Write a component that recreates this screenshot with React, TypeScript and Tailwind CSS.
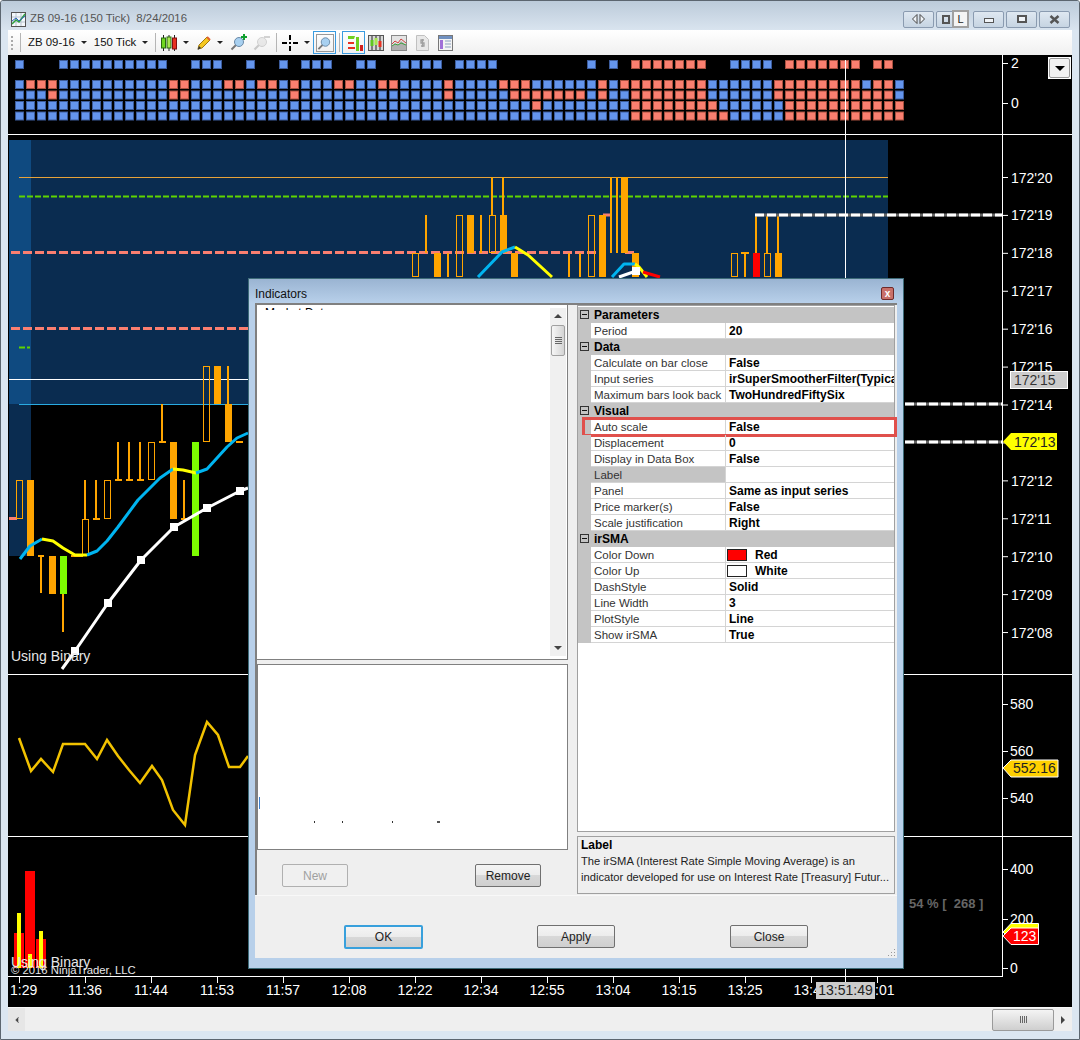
import { ChevronLeft } from "lucide-react"

const orange = "#ffa500"
const salmon = "#fa7f70"
const blue = "#6495ed"

// [first, last] columns, inclusive
const topBlue = [[0, 0], [4, 13], [16, 18], [21, 21], [24, 24], [26, 28], [31, 32], [35, 38], [40, 43], [52, 52], [54, 54], [65, 68]]
const topRed = [[56, 62], [70, 76], [78, 79]]
const rowRed = [
  [[1, 3], [14, 15], [19, 20], [22, 23], [25, 25], [29, 30], [33, 34], [39, 39], [44, 46], [53, 53], [55, 62], [69, 76], [78, 79]],
  [[3, 3], [14, 15], [25, 25], [39, 39], [45, 51], [53, 53], [56, 62], [69, 79]],
  [[47, 47], [56, 63], [70, 80]],
  [[56, 64], [70, 80]],
]

const inRange = (ranges: number[][], i: number) => ranges.some(([a, b]) => i >= a && i <= b)

// solid bodies: x, y1, y2, colour
const solids: [number, number, number, string][] = [
  [27, 480, 556, orange], [49, 556, 594, orange], [60, 556, 594, "#7cfc00"], [170, 442, 519, orange],
  [192, 442, 556, "#7cfc00"], [214, 366, 404, orange], [225, 404, 442, orange],
  [434, 253, 277, orange], [467, 215, 253, orange], [500, 215, 253, orange], [511, 253, 277, orange],
  [599, 215, 277, orange], [621, 177, 253, orange], [632, 253, 277, orange],
  [753, 253, 277, "#ff0000"], [775, 253, 277, orange],
]
// hollow bodies: x, y1, y2
const hollows = [
  [16, 480, 519], [82, 519, 556], [104, 480, 519], [148, 442, 480], [203, 366, 442],
  [412, 253, 277], [456, 215, 277], [489, 215, 253], [588, 215, 277], [731, 253, 277], [764, 253, 277],
]
// wicks: x, y1, y2
const wicks = [
  [41, 556, 593], [63, 594, 632], [85, 480, 519], [96, 480, 519], [118, 442, 480], [129, 442, 480],
  [140, 442, 480], [162, 404, 442], [184, 480, 519], [228, 366, 404],
  [426, 215, 253], [448, 253, 277], [481, 215, 253], [492, 177, 215], [503, 177, 215], [569, 253, 277],
  [580, 253, 277], [611, 177, 253], [617, 177, 253], [745, 253, 277], [756, 215, 253], [767, 215, 253], [778, 215, 253],
]
// small horizontal ticks: x1, x2, y
const ticks = [
  [38, 44, 556], [71, 83, 556], [93, 100, 519], [115, 122, 480], [126, 133, 480], [137, 144, 480],
  [159, 166, 442], [181, 188, 519], [236, 243, 442], [741, 749, 253],
]

const whiteDots = [[75, 651], [108, 603], [141, 560], [174, 527], [207, 508], [240, 491]]
const priceLabels = ["172'20", "172'19", "172'18", "172'17", "172'16", "172'15", "172'14", "172'13", "172'12", "172'11", "172'10", "172'09", "172'08"]
const timeLabels = [
  [85, "11:36"], [151, "11:44"], [217, "11:53"], [283, "11:57"], [349, "12:08"], [415, "12:22"],
  [481, "12:34"], [547, "12:55"], [613, "13:04"], [679, "13:15"], [745, "13:25"], [811, "13:41"], [877, "14:01"],
] as [number, string][]

const grid = [
  { head: "Parameters" },
  { name: "Period", value: "20" },
  { head: "Data" },
  { name: "Calculate on bar close", value: "False" },
  { name: "Input series", value: "irSuperSmootherFilter(Typical)" },
  { name: "Maximum bars look back", value: "TwoHundredFiftySix" },
  { head: "Visual" },
  { name: "Auto scale", value: "False", marked: true },
  { name: "Displacement", value: "0" },
  { name: "Display in Data Box", value: "False" },
  { name: "Label", value: "", selected: true },
  { name: "Panel", value: "Same as input series" },
  { name: "Price marker(s)", value: "False" },
  { name: "Scale justification", value: "Right" },
  { head: "irSMA" },
  { name: "Color Down", value: "Red", swatch: "bg-[#ff0000]" },
  { name: "Color Up", value: "White", swatch: "bg-white" },
  { name: "DashStyle", value: "Solid" },
  { name: "Line Width", value: "3" },
  { name: "PlotStyle", value: "Line" },
  { name: "Show irSMA", value: "True" },
]

function Caret() {
  return <span className="ml-[6px] w-0 h-0 border-x-[3px] border-x-transparent border-t-[3px] border-t-[#222]" />
}

function Separator({ className }: { className: string }) {
  return <span className={`w-px h-[19px] bg-[#b5b5b5] ${className}`} />
}

function CandlesIcon() {
  return (
    <svg width="16" height="18" viewBox="0 0 16 18">
      <path d="M2.5 1v16M8 1v16M13.500 1v16" stroke="#222" />
      <rect x="0.500" y="4" width="4" height="10" fill="#70d820" stroke="#2a6a10" />
      <rect x="6" y="3" width="4" height="11" fill="#a8e850" stroke="#2a6a10" />
      <rect x="11.500" y="4" width="4" height="11" fill="#e83020" stroke="#801010" />
    </svg>
  )
}

function MagnifierIcon({ dim, sign }: { dim?: boolean; sign?: "plus" | "minus" }) {
  return (
    <svg width="17" height="17" viewBox="0 0 17 17" opacity={dim ? 0.35 : 1}>
      <path d="M1.500 15.500 6 11" stroke="#777" strokeWidth="2" />
      <circle cx="9" cy="8" r="4.500" fill={dim ? "#ccc" : "#a8d0f0"} stroke={dim ? "#888" : "#6a8aa8"} />
      {sign === "plus" && <path d="M14 0v6M11 3h6" stroke="#10a030" strokeWidth="2" />}
      {sign === "minus" && <path d="M11 3h6" stroke="#888" strokeWidth="2" />}
    </svg>
  )
}

function ToolbarIcons() {
  return (
    <>
      <span className="ml-[5px]"><CandlesIcon /></span>
      <Caret />
      <svg className="ml-[7px]" width="15" height="16" viewBox="0 0 15 16">
        <path d="M3 10 11 2l3 3-8 8-4 1z" fill="#f5c820" stroke="#a07810" />
        <path d="M1.500 15 3 11l2 2z" fill="#333" />
        <path d="M11 2l3 3" stroke="#e06030" strokeWidth="2" />
      </svg>
      <Caret />
      <span className="ml-[7px]"><MagnifierIcon sign="plus" /></span>
      <span className="ml-[6px]"><MagnifierIcon dim sign="minus" /></span>
      <Separator className="ml-[6px]" />
      <svg className="ml-[5px]" width="16" height="16" viewBox="0 0 16 16">
        <path d="M0 8h5M11 8h5M8 0v5M8 11v5M7 8h2" stroke="#000" strokeWidth="2" />
      </svg>
      <Caret />
      <span className="ml-[3px] w-[23px] h-[23px] border border-[#3a9be0] flex items-center justify-center">
        <span className="w-[18px] h-[18px] border border-[#999] flex items-center justify-center">
          <MagnifierIcon />
        </span>
      </span>
      <Separator className="ml-[3px]" />
      <span className="ml-[2px] w-[23px] h-[23px] border border-[#3a9be0] flex items-center justify-center">
        <svg width="18" height="18" viewBox="0 0 18 18">
          <path d="M3 2h7l-1 3H3z" fill="#6fd020" />
          <path d="M3 8h6v2H3z" fill="#e83020" />
          <path d="M3 13h7v2H3z" fill="#e83020" />
          <rect x="11" y="3" width="3" height="14" fill="#6fd020" />
          <rect x="15" y="11" width="3" height="6" fill="#d02020" />
        </svg>
      </span>
      <span className="ml-[3px]">
        <svg width="16" height="16" viewBox="0 0 16 16">
          <rect x="0.500" y="0.500" width="15" height="15" fill="#d8d8d8" stroke="#555" />
          <path d="M4 1v14M8 1v14M12 1v14" stroke="#222" />
          <rect x="2.500" y="5" width="3" height="6" fill="#60c820" />
          <rect x="6.500" y="3" width="3" height="7" fill="#a8e850" />
          <rect x="10.500" y="6" width="3" height="6" fill="#e83020" />
        </svg>
      </span>
      <span className="ml-[7px]">
        <svg width="16" height="16" viewBox="0 0 16 16">
          <rect x="0.500" y="0.500" width="15" height="15" fill="#e4e4e4" stroke="#888" />
          <path d="M1 15v-4l3-3 3 2 3-4 5 4v5z" fill="#b0b0b0" />
          <path d="M1 9l3-3 3 2 3-4 5 4" fill="none" stroke="#d04040" />
          <path d="M1 11l3-2 3 1 3-2 5 2" fill="none" stroke="#40a040" />
        </svg>
      </span>
      <span className="ml-[9px]">
        <svg width="13" height="16" viewBox="0 0 13 16">
          <path d="M0.500 0.500h8l4 4v11h-12z" fill="#e8e8e8" stroke="#c0c0c0" />
          <path d="M8 5H5v3h3v3H5M6.500 4v8" fill="none" stroke="#a0a0a0" strokeWidth="1.300" />
        </svg>
      </span>
      <span className="ml-[9px]">
        <svg width="15" height="16" viewBox="0 0 15 16">
          <rect x="0.500" y="0.500" width="14" height="15" fill="#f4f4f4" stroke="#777" />
          <rect x="1" y="1" width="13" height="3" fill="#7090c0" />
          <rect x="2" y="5" width="3" height="9" fill="#a070d8" />
          <path d="M7 6h6M7 9h6M7 12h6" stroke="#8aa0c0" />
        </svg>
      </span>
    </>
  )
}

function SignalPanel() {
  const cols = Array.from({ length: 81 }, (_, i) => i)
  const ys = [80.5, 91, 101.500, 112]
  const cell = (i: number, y: number, red: boolean) => (
    <rect
      key={`${i}-${y}`}
      x={15.5 + i * 11}
      y={y}
      width="8"
      height="8"
      fill={red ? salmon : blue}
      stroke={red ? "#a8503f" : "#3c5c9c"}
    />
  )
  return (
    <svg className="block" width="1064" height="80" viewBox="8 55 1064 80">
      {cols.map((i) => {
        if (inRange(topBlue, i)) return cell(i, 60.5, false)
        if (inRange(topRed, i)) return cell(i, 60.5, true)
        return null
      })}
      {ys.map((y, r) => cols.map((i) => cell(i, y, inRange(rowRed[r], i))))}
      <path d="M845.500 60v75M1002.500 55v80M8 134.500h1064M1002 63.500h6M1002 103.500h6" stroke="#fff" />
      <text x="1011" y="68" fill="#fff" fontSize="14">2</text>
      <text x="1011" y="108" fill="#fff" fontSize="14">0</text>
    </svg>
  )
}

function PricePanel() {
  return (
    <svg className="block" width="1064" height="540" viewBox="8 135 1064 540">
      <rect x="9" y="140" width="879" height="264" fill="#0a2c50" />
      <rect x="9" y="140" width="22" height="264" fill="#0f4a80" />
      <rect x="9" y="404" width="22" height="152" fill="#0a2c50" />

      <path d="M19 177.500h869" stroke="#e8a33a" />
      <path d="M19 196.500h869M19 347.500h11" stroke="#5fd400" strokeWidth="2" strokeDasharray="6 2" />
      <path d="M11 252.500h590M11 328.500h237" stroke={salmon} strokeWidth="3" strokeDasharray="9 3" />
      <path d="M9 379.500h239" stroke="#fff" />
      <path d="M19 404.500h229" stroke="#29abe2" />
      <rect x="9" y="517" width="8" height="3" fill={salmon} />
      <rect x="603" y="213.500" width="9" height="3" fill={salmon} />
      <rect x="625" y="251" width="9" height="3" fill={salmon} />

      {wicks.map(([x, a, b]) => <rect key={`w${x}${a}`} x={x - 1} y={a} width="2" height={b - a} fill={orange} />)}
      {ticks.map(([a, b, y]) => <rect key={`t${a}`} x={a} y={y - 1} width={b - a} height="2" fill={orange} />)}
      {hollows.map(([x, a, b]) => (
        <rect key={`h${x}`} x={x + 0.5} y={a + 0.5} width="6" height={b - a - 1} fill="none" stroke={orange} />
      ))}
      {solids.map(([x, a, b, c]) => <rect key={`s${x}`} x={x} y={a} width="7" height={b - a} fill={c} />)}

      <g fill="none" strokeWidth="3" strokeLinejoin="round">
        <path d="M20 559 30 546 42 539" stroke="#00b4f0" />
        <path d="M42 539 53 541 63 548 75 555 87 555" stroke="#ffff00" />
        <path d="M87 555 97 551 107 541 118 527 138 500 160 478 173 469" stroke="#00b4f0" />
        <path d="M173 469 183 470 196 473" stroke="#ffff00" />
        <path d="M196 473 207 469 227 447 237 438 248 433" stroke="#00b4f0" />
        <path d="M478 277 502 252 515 247" stroke="#00b4f0" />
        <path d="M515 247 528 255 552 277" stroke="#ffff00" />
        <path d="M612 277 624 264 635 264" stroke="#00b4f0" />
        <path d="M635 264 639 267 647 277" stroke="#ffff00" />
        <path d="M643 272 660 277" stroke="#ff0000" />
        <path d="M619 277 636 271" stroke="#fff" />
        <path d="M62 669 75 651 108 603 141 560 174 527 207 508 240 491 248 488" stroke="#fff" />
      </g>
      {whiteDots.map(([x, y]) => <rect key={x} x={x - 4} y={y - 4} width="8" height="8" fill="#fff" />)}
      <rect x="632" y="267" width="8" height="8" fill="#fff" />

      <path d="M755 215h247M905 404h97M905 442h97" stroke="#666" strokeWidth="3" />
      <path d="M755 215h247M905 404h97M905 442h97" stroke="#fff" strokeWidth="3" strokeDasharray="9 3" />
      <path d="M845.500 135v540M1002.500 135v540M8 674.500h1064" stroke="#fff" />

      {priceLabels.map((label, i) => (
        <g key={label}>
          <path d={`M1002 ${177.5 + i * 37.92}h6`} stroke="#fff" />
          <text x="1011" y={182.500 + i * 37.92} fill="#fff" fontSize="14">{label}</text>
        </g>
      ))}

      <rect x="1010.500" y="371.500" width="57" height="17" fill="#cccccc" stroke="#fff" />
      <text x="1014" y="385" fill="#333" fontSize="14">172'15</text>
      <polygon points="1003,441.500 1011,433 1057,433 1057,450 1011,450" fill="#ffff00" />
      <text x="1014" y="447" fill="#222" fontSize="14">172'13</text>

      <text x="11" y="661" fill="#e8e8e8" fontSize="14">Using Binary</text>
    </svg>
  )
}

function IndicatorPanel() {
  return (
    <svg className="block" width="1064" height="162" viewBox="8 675 1064 162">
      <path
        d="M19 738 31 771 41 759 53 772 63 744 85 744 97 759 107 740 118 756 129 770 140 783 152 766 162 780 173 810 185 825 195 755 207 722 218 735 229 767 240 767 248 756"
        fill="none"
        stroke="#f2c200"
        strokeWidth="2.500"
      />
      <path d="M845.500 675v162M1002.500 675v162M8 836.500h1064M1002 704.500h6M1002 751.500h6M1002 798.500h6" stroke="#fff" />
      <text x="1010" y="709" fill="#fff" fontSize="14">580</text>
      <text x="1010" y="756" fill="#fff" fontSize="14">560</text>
      <text x="1010" y="803" fill="#fff" fontSize="14">540</text>
      <polygon points="1003,768 1011,760 1058,760 1058,777 1011,777" fill="#ffd000" stroke="#fff" />
      <text x="1013" y="773" fill="#222" fontSize="14">552.16</text>
    </svg>
  )
}

function VolumePanel() {
  return (
    <svg className="block" width="1064" height="140" viewBox="8 837 1064 140">
      <rect x="14" y="933" width="10" height="35" fill="#ff0000" />
      <rect x="25" y="871" width="10" height="97" fill="#ff0000" />
      <rect x="36" y="939" width="10" height="29" fill="#ff0000" />
      <rect x="17" y="913" width="4" height="55" fill="#ffff00" />
      <rect x="28" y="954" width="4" height="14" fill="#ffff00" />
      <rect x="39" y="931" width="4" height="37" fill="#ffff00" />
      <text x="11" y="967" fill="#e8e8e8" fontSize="14">Using Binary</text>
      <text x="11" y="974" fill="#e8e8e8" fontSize="11.300">© 2016 NinjaTrader, LLC</text>
      <text x="909" y="908" fill="#666" fontSize="13" fontWeight="700" className="whitespace-pre">54 % [  268 ]</text>
      <path d="M845.500 837v140M1002.500 837v140M1002 869.500h6M1002 919.500h6M1002 968.500h6M8 976.500h995" stroke="#fff" />
      <text x="1010" y="874" fill="#fff" fontSize="14">400</text>
      <text x="1010" y="924" fill="#fff" fontSize="14">200</text>
      <text x="1010" y="973" fill="#fff" fontSize="14">0</text>
      <polygon points="1003,932 1011,923.500 1038.500,923.500 1038.500,940 1011,940" fill="#ffff00" stroke="#fff" />
      <polygon points="1003,936 1011,928 1038.500,928 1038.500,944.500 1011,944.500" fill="#ff0000" stroke="#fff" />
      <text x="1013" y="941" fill="#fff" fontSize="14">123</text>
    </svg>
  )
}

function TimeAxis() {
  return (
    <svg className="block" width="1064" height="30" viewBox="8 977 1064 30">
      <path d="M19.500 977v6M845.500 977v6" stroke="#fff" />
      <text x="10" y="995" fill="#fff" fontSize="14">1:29</text>
      {timeLabels.map(([x, label]) => (
        <g key={label}>
          <path d={`M${x + 0.5} 977v6`} stroke="#fff" />
          <text x={x} y="995" fill="#fff" fontSize="14" textAnchor="middle">{label}</text>
        </g>
      ))}
      <rect x="816" y="982" width="59" height="17" fill="#cccccc" />
      <text x="845.500" y="995" fill="#222" fontSize="14" textAnchor="middle">13:51:49</text>
    </svg>
  )
}

function DialogButton({ label, className }: { label: string; className: string }) {
  return (
    <button className={`h-[23px] rounded-[2px] text-[12px] bg-[linear-gradient(#f4f4f4_0%,#ececec_48%,#d8d8d8_50%,#cfcfcf_100%)] ${className}`}>
      {label}
    </button>
  )
}

function PropertyGrid() {
  return (
    <div className="h-[527px] border border-[#a0a0a0] bg-white pt-px text-[11.5px] leading-[16px]">
      {grid.map((row) =>
        row.head ? (
          <div key={row.head} className="relative h-[16px] bg-[#c4c4c4] flex items-center font-bold text-[12px] text-black pl-[16px]">
            <span className="absolute left-[2px] top-[3px] w-[9px] h-[9px] border border-[#333] flex items-center justify-center">
              <span className="w-[5px] h-px bg-[#111]" />
            </span>
            {row.head}
          </div>
        ) : (
          <div key={row.name} className="relative h-[16px] flex">
            <span className="w-[13px] shrink-0 bg-[#c4c4c4]" />
            <span className={`w-[135px] shrink-0 pl-[3px] text-[#333] border-b border-r border-[#d4d4d4] ${row.selected ? "bg-[#c4c4c4]" : ""}`}>
              {row.name}
            </span>
            <span className="flex-1 min-w-0 pl-[3px] font-bold text-[12px] text-black whitespace-nowrap overflow-hidden border-b border-[#d4d4d4] flex items-center">
              {row.swatch && <span className={`w-[20px] h-[12px] border border-[#222] mr-[8px] -ml-[2px] shrink-0 ${row.swatch}`} />}
              {row.value}
            </span>
            {row.marked && (
              <span className="absolute left-[4px] -right-[3px] -top-[2px] -bottom-[2px] border-[3px] border-[#e0504c]" />
            )}
          </div>
        )
      )}
    </div>
  )
}

function Scrollbar() {
  return (
    <div className="w-[16px] my-[3px] bg-[#f0f0f0] flex flex-col items-center shrink-0">
      <span className="mt-[6px] w-0 h-0 border-x-[4px] border-x-transparent border-b-[4px] border-b-[#444]" />
      <div className="mt-[7px] w-[14px] h-[31px] border border-[#a0a0a0] rounded-[2px] bg-[linear-gradient(90deg,#f6f6f6,#d4d4d4)] flex flex-col items-center justify-center gap-px">
        <span className="w-[7px] h-px bg-[#666]" />
        <span className="w-[7px] h-px bg-[#666]" />
        <span className="w-[7px] h-px bg-[#666]" />
        <span className="w-[7px] h-px bg-[#666]" />
      </div>
      <span className="mt-auto mb-[6px] w-0 h-0 border-x-[4px] border-x-transparent border-t-[4px] border-t-[#444]" />
    </div>
  )
}

function IndicatorsDialog() {
  return (
    <div className="absolute left-[247px] top-[277px] w-[656px] h-[691px] border border-[#3d6b78] bg-[#b8d0ea] flex flex-col">
      <div className="h-[24px] shrink-0 px-[6px] flex items-center justify-between bg-[linear-gradient(#9ab4d2,#b8d0ea)]">
        <span className="text-[12px] text-[#111] mt-[6px]">Indicators</span>
        <span className="mr-[3px] mt-[5px] w-[13px] h-[13px] border border-[#6e2a2a] rounded-[2px] bg-[#c8706a] flex items-center justify-center text-white text-[10px] leading-none font-bold">
          x
        </span>
      </div>

      <div className="mx-[6px] h-[592px] shrink-0 flex bg-[#efefef] border-l-2 border-t-2 border-[#808080]">
        <div className="w-[311px] shrink-0 flex flex-col">
          <div className="h-[355px] bg-white border-r border-b border-[#808080] flex justify-between pr-[1px]">
            <div className="pl-[8px] pt-px">
              <div className="h-[4px] overflow-hidden text-[12px] leading-[14px] text-black">Market Data</div>
            </div>
            <Scrollbar />
          </div>
          <div className="mt-[4px] h-[186px] bg-white border border-[#808080] relative">
            <span className="absolute left-px top-[132px] w-px h-[12px] bg-[#3a80d0]" />
            <span className="absolute left-[56px] top-[156px] w-px h-[2px] bg-[#333]" />
            <span className="absolute left-[84px] top-[156px] w-px h-[2px] bg-[#333]" />
            <span className="absolute left-[134px] top-[156px] w-px h-[2px] bg-[#333]" />
            <span className="absolute left-[179px] top-[156px] w-[3px] h-[2px] bg-[#555]" />
          </div>
          <div className="flex pl-[25px] pt-[14px] gap-[127px]">
            <DialogButton label="New" className="w-[66px] border border-[#b0b0b0] text-[#a0a0a0] !bg-none bg-[#f0f0f0]" />
            <DialogButton label="Remove" className="w-[66px] border border-[#707070] text-[#222]" />
          </div>
        </div>
        <div className="w-[318px] ml-[9px] shrink-0 flex flex-col">
          <PropertyGrid />
          <div className="mt-[4px] h-[58px] border border-[#a0a0a0] bg-[#efefef] px-[3px] text-[11.2px] leading-[16px] text-[#222]">
            <div className="font-bold text-[12px] text-black">Label</div>
            <div>The irSMA (Interest Rate Simple Moving Average) is an</div>
            <div className="whitespace-nowrap">indicator developed for use on Interest Rate [Treasury] Futur...</div>
          </div>
        </div>
      </div>

      <div className="relative mx-[6px] h-[63px] shrink-0 bg-[#efefef] border-t border-[#f8f8f8] flex pl-[89px] pt-[29px]">
        <DialogButton label="OK" className="w-[79px] border-2 border-[#38a0dc] text-[#222] !h-[24px]" />
        <DialogButton label="Apply" className="w-[78px] ml-[114px] border border-[#707070] text-[#222]" />
        <DialogButton label="Close" className="w-[78px] ml-[115px] border border-[#707070] text-[#222]" />
        <svg className="absolute right-[1px] bottom-[1px]" width="8" height="8" viewBox="0 0 8 8">
          <path d="M6 0h1v1H6zM3 3h1v1H3zM6 3h1v1H6zM0 6h1v1H0zM3 6h1v1H3zM6 6h1v1H6z" fill="#999" />
        </svg>
      </div>
    </div>
  )
}

function WindowButton({ children }: { children?: React.ReactNode }) {
  return (
    <span className="w-[31px] h-[17px] border border-[#8a9bb0] rounded-[2px] bg-[linear-gradient(#dfe8f1,#c6d4e2)] flex items-center justify-center">
      {children}
    </span>
  )
}

export default function App() {
  return (
    <div className="relative w-[1080px] h-[1040px] overflow-hidden bg-[#dbe6f1] border border-[#5c6670] rounded-t-[3px] font-['Liberation_Sans',Arial,sans-serif]">
      {/* Title bar */}
      <div className="h-[29px] px-[7px] pt-[7px] flex items-center bg-[linear-gradient(#bccbda,#d9e4ef)]">
        <svg className="ml-[3px]" width="15" height="15" viewBox="0 0 15 15">
          <rect x="0.500" y="0.500" width="14" height="14" fill="#f4f8fb" stroke="#555" />
          <path d="M5 1v13M10 1v13M1 5h13M1 10h13" stroke="#b8c4d0" />
          <path d="M1 12l4-4 3 2 6-8" fill="none" stroke="#30a040" strokeWidth="1.500" />
          <path d="M1 9l4-3 3 3 6-5" fill="none" stroke="#3060c0" />
        </svg>
        <span className="ml-[4px] text-[11.4px] text-[#555] whitespace-pre">ZB 09-16 (150 Tick)  8/24/2016</span>
        <div className="ml-auto mr-[2px] flex items-center">
          <WindowButton>
            <svg width="13" height="10" viewBox="0 0 13 10">
              <path d="M5 0.500v9L0.500 5zM8 0.500v9L12.500 5z" fill="#f0f4f8" stroke="#444" />
            </svg>
          </WindowButton>
          <span className="relative ml-[2px]">
            <WindowButton>
              <span className="w-[8px] h-[9px] border-2 border-[#555] -ml-[12px]" />
            </WindowButton>
            <span className="absolute -right-[2px] -top-px w-[17px] h-[18px] border-2 border-[#a0a0a0] bg-[#f4f4f4] text-[11px] leading-[14px] text-center text-[#222]">L</span>
          </span>
          <span className="ml-[6px]">
            <WindowButton><span className="w-[10px] h-[5px] mt-[2px] border border-[#555] bg-[#f0f4f8]" /></WindowButton>
          </span>
          <span className="ml-[2px]">
            <WindowButton><span className="w-[10px] h-[8px] border-2 border-[#555] bg-[#f0f4f8]" /></WindowButton>
          </span>
          <span className="ml-[2px]">
            <WindowButton>
              <svg width="11" height="9" viewBox="0 0 11 9">
                <path d="M1.500 1 9.500 8M9.500 1 1.500 8" stroke="#555" strokeWidth="2.500" />
              </svg>
            </WindowButton>
          </span>
        </div>
      </div>

      {/* Toolbar */}
      <div className="mx-[7px] h-[25px] flex items-center bg-[linear-gradient(#ffffff,#f0f0f0)] text-[11.4px] text-[#111]">
        <span className="ml-[3px] w-[2px] h-[14px] border-l-2 border-dotted border-[#aaa]" />
        <Separator className="ml-[7px]" />
        <span className="ml-[7px]">ZB 09-16</span>
        <Caret />
        <span className="ml-[7px]">150 Tick</span>
        <Caret />
        <Separator className="ml-[7px]" />
        <ToolbarIcons />
      </div>

      {/* Chart */}
      <div className="relative mx-[7px] h-[952px] bg-black">
        <SignalPanel />
        <PricePanel />
        <IndicatorPanel />
        <VolumePanel />
        <TimeAxis />
        <span className="absolute right-px top-[2px] w-[23px] h-[22px] bg-white p-px">
          <span className="w-full h-full border border-[#999] rounded-[2px] bg-[#f2f2f2] flex items-center justify-center">
            <span className="w-0 h-0 border-x-[5px] border-x-transparent border-t-[5px] border-t-black" />
          </span>
        </span>
      </div>

      {/* Scrollbar */}
      <div className="mx-[7px] h-[24px] bg-[#efefef] border-t border-[#f8f8f8] flex items-center">
        <span className="w-[17px] h-full bg-[#e6e6e6] flex items-center justify-center">
          <ChevronLeft size={10} className="text-[#444] fill-[#444]" />
        </span>
        <span className="ml-auto w-[62px] h-[22px] border border-[#9a9a9a] rounded-[2px] bg-[linear-gradient(#f4f4f4,#cfcfcf)] flex items-center justify-center gap-px">
          <span className="w-px h-[7px] bg-[#666]" />
          <span className="w-px h-[7px] bg-[#666]" />
          <span className="w-px h-[7px] bg-[#666]" />
          <span className="w-px h-[7px] bg-[#666]" />
        </span>
        <span className="w-[18px] flex justify-center">
          <span className="w-0 h-0 border-y-[4px] border-y-transparent border-l-[4px] border-l-[#444]" />
        </span>
      </div>

      <IndicatorsDialog />
    </div>
  )
}
